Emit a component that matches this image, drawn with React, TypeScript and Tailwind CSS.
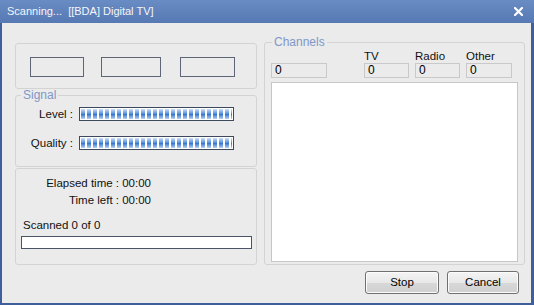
import React from "react";

const font = { fontFamily: '"Liberation Sans", Arial, sans-serif' };

function SignalBar() {
  return (
    <div className="h-[14px] w-[155px] border border-[#3d4a5e] bg-white p-[1px]">
      <div className="h-full w-full bg-[repeating-linear-gradient(90deg,transparent_0_4px,#fff_4px_6px),linear-gradient(#cfe0f6,#5b93dc_45%,#3a78cf_55%,#b9d2f2)]" />
    </div>
  );
}

function CountBox({ w }: { w: string }) {
  return (
    <div className={`${w} h-[15px] border border-[#c9c9c9] bg-[#ebebeb] pl-[3px] text-[12px] leading-[13px] text-black`}>
      0
    </div>
  );
}

export default function App() {
  return (
    <div
      className="flex h-[305px] w-[534px] flex-col overflow-hidden bg-[#3f5f9b] text-[11.5px] text-[#111]"
      style={font}
    >
      {/* title bar */}
      <div className="flex h-[23px] shrink-0 items-center justify-between bg-[linear-gradient(#6a8cc4,#5679b4)] pl-[7px] pr-[11px]">
        <span className="text-[11px] text-[#f4f6fb]">Scanning...&nbsp; [[BDA] Digital TV]</span>
        <svg width="9" height="9" viewBox="0 0 9 9">
          <path d="M1 1 L8 8 M8 1 L1 8" stroke="#fff" strokeWidth="2.2" strokeLinecap="square" />
        </svg>
      </div>

      {/* body */}
      <div className="mb-[2px] ml-[2px] mr-[3px] flex flex-1 flex-col bg-[#ebebeb] pl-[13px] pr-[10px] pt-[20px]">
        <div className="flex gap-[7px]">
          {/* left column */}
          <div className="flex w-[242px] flex-col">
            <div className="flex h-[46px] items-start rounded-[3px] border border-[#d3d3d3] pt-[13px]">
              <div className="ml-[14px] h-[20px] w-[54px] border border-[#5d6577]" />
              <div className="ml-[17px] h-[20px] w-[60px] border border-[#5d6577]" />
              <div className="ml-[19px] h-[20px] w-[55px] border border-[#5d6577]" />
            </div>

            <fieldset className="mt-0 h-[78px] rounded-[3px] border border-[#d3d3d3] px-0 pb-0 pt-0">
              <legend className="ml-[5px] px-[2px] text-[12px] leading-[13px] text-[#8097c8]">Signal</legend>
              <div className="mt-[5px] flex items-center leading-[14px]">
                <span className="w-[63px] pr-[6px] text-right">Level :</span>
                <SignalBar />
              </div>
              <div className="mt-[15px] flex items-center leading-[14px]">
                <span className="w-[63px] pr-[6px] text-right">Quality :</span>
                <SignalBar />
              </div>
            </fieldset>

            <div className="mt-[1px] h-[97px] rounded-[3px] border border-[#d3d3d3] px-[5px] pt-[6px]">
              <div className="flex flex-col items-end pr-[100px] leading-[17px]">
                <span>Elapsed time : 00:00</span>
                <span>Time left : 00:00</span>
              </div>
              <div className="mt-[9px] pl-[2px] leading-[14px]">Scanned 0 of 0</div>
              <div className="mt-[4px] h-[13px] w-[231px] border border-[#4a5466] bg-white" />
            </div>
          </div>

          {/* right column */}
          <fieldset className="-mt-[7px] h-[229px] w-[258px] rounded-[3px] border border-[#d3d3d3] px-[6px] pb-[3px] pt-0">
            <legend className="ml-[1px] px-[2px] text-[12px] leading-[13px] text-[#8097c8]">Channels</legend>
            <div className="flex items-end">
              <div className="w-[93px] pt-[12px]">
                <CountBox w="w-[56px]" />
              </div>
              <div className="w-[51px]">
                <div className="leading-[14px]">TV</div>
                <CountBox w="w-[45px]" />
              </div>
              <div className="w-[51px]">
                <div className="leading-[14px]">Radio</div>
                <CountBox w="w-[45px]" />
              </div>
              <div className="w-[51px]">
                <div className="leading-[14px]">Other</div>
                <CountBox w="w-[46px]" />
              </div>
            </div>
            <div className="mt-[4px] h-[180px] w-[247px] border border-[#c6c6c6] bg-white" />
          </fieldset>
        </div>

        {/* buttons */}
        <div className="mt-[6px] flex justify-end gap-[8px] pr-[2px]">
          <button className="h-[23px] w-[74px] rounded-[3px] border border-[#707070] bg-[linear-gradient(#f4f4f4,#e8e8e8_50%,#d8d8d8_51%,#d0d0d0)] text-[11.5px] text-black shadow-[inset_0_0_0_1px_#fcfcfc]">
            Stop
          </button>
          <button className="h-[23px] w-[72px] rounded-[3px] border border-[#707070] bg-[linear-gradient(#f4f4f4,#e8e8e8_50%,#d8d8d8_51%,#d0d0d0)] text-[11.5px] text-black shadow-[inset_0_0_0_1px_#fcfcfc]">
            Cancel
          </button>
        </div>
      </div>
    </div>
  );
}
